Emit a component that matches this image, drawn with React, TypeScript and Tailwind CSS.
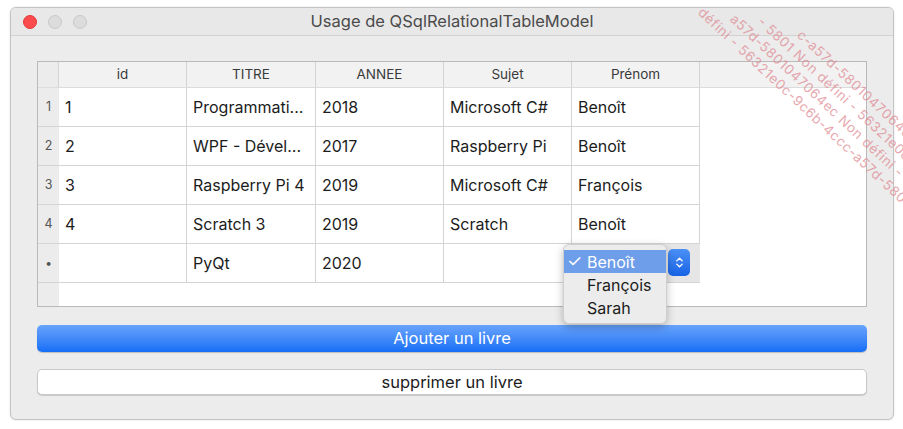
import { ChevronsUpDown } from 'lucide-react';

const rows = [
    { n: '1', id: '1', titre: 'Programmati...', annee: '2018', sujet: 'Microsoft C#', prenom: 'Benoît' },
    { n: '2', id: '2', titre: 'WPF - Dével...', annee: '2017', sujet: 'Raspberry Pi', prenom: 'Benoît' },
    { n: '3', id: '3', titre: 'Raspberry Pi 4', annee: '2019', sujet: 'Microsoft C#', prenom: 'François' },
    { n: '4', id: '4', titre: 'Scratch 3', annee: '2019', sujet: 'Scratch', prenom: 'Benoît' },
];

const headers = ['id', 'TITRE', 'ANNEE', 'Sujet', 'Prénom'];

const cols = 'grid grid-cols-[21px_128px_129px_128px_128px_128px_1fr]';

// watermark lines, bottom one first
const marks = [
    'défini - 56321e0c-9c6b-4ccc-a57d-5801047064ec',
    'a57d-5801047064ec Non défini - 56321e0c',
    '- 5801 Non défini - 56321e0c-9c6b',
    'c-a57d-5801047064ec Non',
];

export default function App() {
    return (
        <div className="relative w-[903px] h-[429px] bg-white overflow-hidden font-['Inter','Liberation_Sans',sans-serif] text-[#1c1c1c]">
            <div className="absolute left-[10px] top-[7px] w-[884px] h-[413px] rounded-[6px] border border-[#c4c4c4] bg-[#ececec] flex flex-col overflow-hidden shadow-[0_0_2px_rgba(0,0,0,0.15)]">
                {/* title bar */}
                <div className="relative h-[28px] flex items-center justify-center border-b border-[#d2d2d2] bg-[#e8e8e8]">
                    <div className="absolute left-[12px] top-[7px] flex gap-[11px]">
                        <span className="w-[14px] h-[14px] rounded-full bg-[#fc4b4c] border border-[#e2393a]" />
                        <span className="w-[14px] h-[14px] rounded-full bg-[#dcdcdc] border border-[#c9c9c9]" />
                        <span className="w-[14px] h-[14px] rounded-full bg-[#dcdcdc] border border-[#c9c9c9]" />
                    </div>
                    <span className="text-[16.5px] text-[#4b4b4b]">Usage de QSqlRelationalTableModel</span>
                </div>

                <div className="flex flex-col px-[26px] pt-[25px]">
                    {/* table */}
                    <div className="h-[246px] border border-[#b9b9b9] bg-white flex flex-col overflow-hidden">
                        <div className={`${cols} h-[26px] bg-[#f2f2f2] border-b border-[#dcdcdc] text-[13.5px] text-[#3a3a3a]`}>
                            <div className="border-r border-[#d4d4d4] bg-[#ececec]" />
                            {headers.map((h) => (
                                <div key={h} className="flex items-center justify-center border-r border-[#d4d4d4]">{h}</div>
                            ))}
                            <div />
                        </div>
                        {rows.map((r) => (
                            <div key={r.n} className={`${cols} h-[39px] text-[16px]`}>
                                <div className="flex items-center justify-center text-[12.5px] text-[#555] bg-[#ececec] border-b border-[#d4d4d4]">{r.n}</div>
                                {[r.id, r.titre, r.annee, r.sujet, r.prenom].map((v, i) => (
                                    <div key={i} className="flex items-center px-[6px] border-r border-b border-[#d4d4d4] whitespace-nowrap overflow-hidden">{v}</div>
                                ))}
                                <div />
                            </div>
                        ))}
                        <div className={`${cols} h-[39px] text-[16px]`}>
                            <div className="flex items-center justify-center text-[12px] text-[#555] bg-[#ececec] border-b border-[#d4d4d4]">•</div>
                            <div className="border-r border-b border-[#d4d4d4]" />
                            <div className="flex items-center px-[6px] border-r border-b border-[#d4d4d4]">PyQt</div>
                            <div className="flex items-center px-[6px] border-r border-b border-[#d4d4d4]">2020</div>
                            <div className="border-r border-b border-[#d4d4d4]" />
                            <div className="relative bg-[#e6e6e6] border-b border-[#d4d4d4]">
                                <div className="absolute left-[96px] top-[5px] w-[22px] h-[27px] rounded-[5px] bg-gradient-to-b from-[#4b90f6] to-[#1763e6] flex items-center justify-center">
                                    <ChevronsUpDown className="w-[13px] h-[13px] text-white" strokeWidth={2.5} />
                                </div>
                            </div>
                            <div />
                        </div>
                        <div className={`${cols} flex-1`}>
                            <div className="bg-[#ececec]" />
                        </div>
                    </div>

                    {/* buttons */}
                    <button className="mt-[18px] h-[27px] rounded-[5px] bg-gradient-to-b from-[#67a3fb] to-[#146ef6] text-white text-[16.5px] shadow-[0_1px_1px_rgba(0,0,0,0.2)]">
                        Ajouter un livre
                    </button>
                    <button className="mt-[17px] h-[26px] rounded-[5px] bg-white border border-[#c8c8c8] text-[16.5px] shadow-[0_1px_1px_rgba(0,0,0,0.15)]">
                        supprimer un livre
                    </button>
                </div>
            </div>

            {/* combobox popup */}
            <div className="absolute left-[563px] top-[244px] w-[104px] h-[80px] rounded-[6px] bg-[#ececec] border border-[#cfcfcf] shadow-[0_3px_8px_rgba(0,0,0,0.25)] pt-[5px] text-[16px]">
                <div className="h-[23px] bg-[#6e9de9] text-white flex items-center pl-[3px]">
                    <span className="w-[20px] text-[17px] leading-none">✓</span>Benoît
                </div>
                <div className="h-[23px] flex items-center pl-[23px]">François</div>
                <div className="h-[23px] flex items-center pl-[23px]">Sarah</div>
            </div>

            {/* watermark */}
            <div className="pointer-events-none absolute left-[706px] top-[4px] w-[290px] h-[20px] rotate-[43deg] origin-top-left text-[13.5px] tracking-[0.6px] text-[#df8d96] opacity-75 whitespace-nowrap">
                <div className="absolute left-0 top-0 leading-[16px]">{marks[0]}</div>
                <div className="absolute left-[28px] top-[-17px] leading-[16px]">{marks[1]}</div>
                <div className="absolute left-[50px] top-[-34px] leading-[16px]">{marks[2]}</div>
                <div className="absolute left-[88px] top-[-51px] leading-[16px]">{marks[3]}</div>
            </div>
        </div>
    );
}
